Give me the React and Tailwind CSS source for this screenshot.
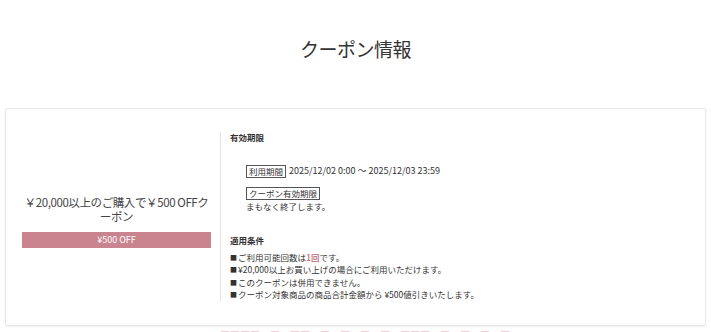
export default function App() {
  const Sq = () => <span className="text-[7px] align-[1px] mr-[1px]">■</span>;
  const conditions = [
    <>ご利用可能回数は<span className="font-bold text-[#c47f8d]">1回</span>です。</>,
    <>¥20,000以上お買い上げの場合にご利用いただけます。</>,
    <>このクーポンは併用できません。</>,
    <>クーポン対象商品の商品合計金額から ¥500値引きいたします。</>,
  ];

  return (
    <div
      className="w-[711px] h-[332px] overflow-hidden bg-white text-[#333]"
      style={{ fontFamily: '"Noto Sans CJK JP", "Noto Sans", sans-serif' }}
    >
      {/* Page title */}
      <div className="h-[108px] flex items-center justify-center pb-[12px]">
        <h1 className="text-[19px] font-normal leading-none tracking-[-0.5px]">クーポン情報</h1>
      </div>

      {/* Coupon card */}
      <div className="mx-[5px] h-[218px] border border-[#e8e8e8] rounded-[2px] shadow-[0_1px_2px_rgba(0,0,0,0.06)] flex py-[23px]">
        {/* Left: coupon name */}
        <div className="w-[214px] shrink-0 flex flex-col justify-center pl-[16px] pr-[9px] pt-[8px]">
          <p className="text-[11.5px] tracking-[-0.4px] leading-[14px] text-center text-[#444] break-all">
            ￥20,000以上のご購入で￥500 OFFクーポン
          </p>
          <div className="mt-[9px] h-[16px] bg-[#c98490] text-white text-[9px] flex items-center justify-center">
            ¥500 OFF
          </div>
        </div>

        {/* Right: details */}
        <div className="flex-1 border-l border-[#e6e6e6] pl-[9px] text-[8.5px] leading-[12.5px]">
          <h3 className="font-bold -mt-[1px]">有効期限</h3>
          <div className="ml-[16px] mt-[21px] flex items-center gap-[3px]">
            <span className="border border-[#555] px-[2px] leading-[11px]">利用期間</span>
            <span className="text-[9px]">2025/12/02 0:00 ～ 2025/12/03 23:59</span>
          </div>
          <div className="ml-[16px] mt-[9px]">
            <span className="inline-block border border-[#555] px-[2px] leading-[11px]">クーポン有効期限</span>
            <p>まもなく終了します。</p>
          </div>

          <h3 className="font-bold mt-[22px]">適用条件</h3>
          <ul className="mt-[4px]">
            {conditions.map((c, i) => (
              <li key={i}>
                <Sq />
                {c}
              </li>
            ))}
          </ul>
        </div>
      </div>

      {/* Next section peeking in */}
      <p className="mt-[3px] ml-[220px] text-[10px] text-[#f0cfd9] leading-[12px]">
        ■■■■　■　■■　■　■　■　■　■■■　■　■　■　■
      </p>
    </div>
  );
}
